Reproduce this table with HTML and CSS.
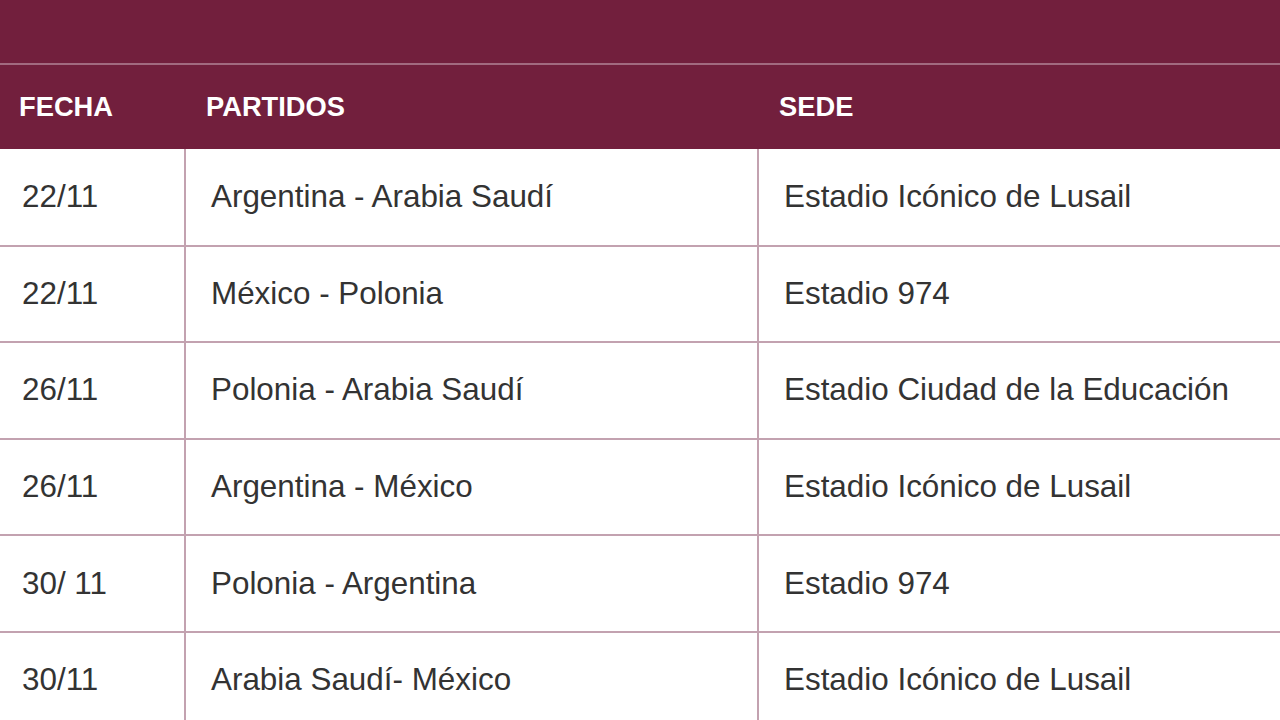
FILE: index.html
```html
<!DOCTYPE html>
<html lang="es">
<head>
<meta charset="utf-8">
<link rel="stylesheet" href="styles.css">
</head>
<body>
<div class="band"></div>
<table class="fixture">
  <colgroup>
    <col class="c-date">
    <col class="c-match">
    <col class="c-venue">
  </colgroup>
  <thead>
    <tr><th>FECHA</th><th>PARTIDOS</th><th>SEDE</th></tr>
  </thead>
  <tbody>
    <tr><td>22/11</td><td>Argentina - Arabia Saudí</td><td>Estadio Icónico de Lusail</td></tr>
    <tr><td>22/11</td><td>México - Polonia</td><td>Estadio 974</td></tr>
    <tr><td>26/11</td><td>Polonia - Arabia Saudí</td><td>Estadio Ciudad de la Educación</td></tr>
    <tr><td>26/11</td><td>Argentina - México</td><td>Estadio Icónico de Lusail</td></tr>
    <tr><td>30/ 11</td><td>Polonia - Argentina</td><td>Estadio 974</td></tr>
    <tr><td>30/11</td><td>Arabia Saudí- México</td><td>Estadio Icónico de Lusail</td></tr>
  </tbody>
</table>
</body>
</html>
```
FILE: styles.css
```css
html, body {
  margin: 0;
  padding: 0;
  background: #ffffff;
  overflow: hidden;
}
body {
  width: 1280px;
  height: 720px;
  font-family: "Liberation Sans", Arial, sans-serif;
}
.band {
  height: 63px;
  background: #721f3d;
  border-bottom: 2px solid #a26a80;
}
.fixture {
  width: 1280px;
  border-collapse: collapse;
  table-layout: fixed;
}
.c-date { width: 185px; }
.c-match { width: 573px; }
.c-venue { width: 522px; }
.fixture thead tr {
  height: 84px;
  background: #721f3d;
}
.fixture th {
  color: #ffffff;
  font-weight: bold;
  font-size: 27.3px;
  text-align: left;
  padding: 0 0 0 19px;
  vertical-align: middle;
}
.fixture th + th { padding-left: 21px; }
.fixture tbody tr {
  height: 96.6px;
}
.fixture td {
  color: #333333;
  font-size: 31.4px;
  padding: 0 0 0 22px;
  vertical-align: middle;
  border-bottom: 2px solid #c3a2b0;
  border-left: 2px solid #c3a2b0;
  white-space: nowrap;
}
.fixture td:first-child { border-left: none; }
.fixture td + td { padding-left: 25px; }
```
